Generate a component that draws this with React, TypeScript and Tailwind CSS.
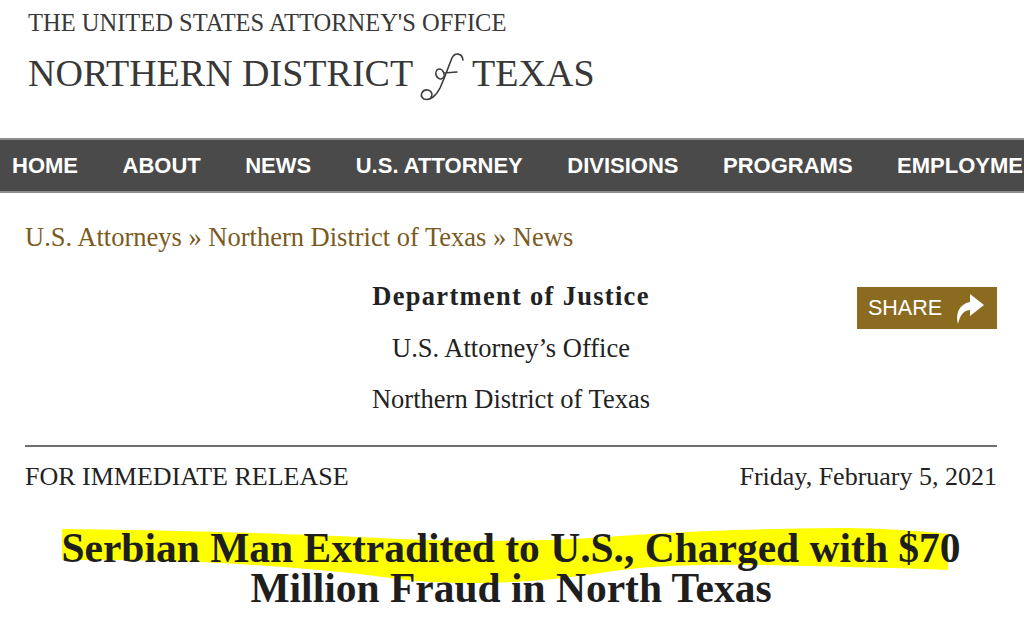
import React from 'react';

const navItems = ['HOME', 'ABOUT', 'NEWS', 'U.S. ATTORNEY', 'DIVISIONS', 'PROGRAMS', 'EMPLOYMENT'];

const ShareArrow: React.FC = () => (
  <svg width="32" height="36" viewBox="0 0 32 36" className="block">
    <path d="M5 34 C2 24 6 14 17 12 L17 4 L31 15 L17 26 L17 20 C11 20 7 25 5 34 Z" fill="#ffffff" />
  </svg>
);

// script "of" between DISTRICT and TEXAS
const LogoOf: React.FC = () => (
  <svg width="56" height="60" viewBox="0 0 56 60" className="absolute left-0 top-[-6px]">
    <ellipse cx="25" cy="27" rx="4" ry="5" transform="rotate(-20 25 27)" fill="none" stroke="#3c3c3c" strokeWidth="1.6" />
    <path
      d="M48 13 C47 6 40 5 37 11 C34 18 30 30 25 41 C21 49 15 54 9 52 C4 49 7 42 13 43 C17 44 18 48 16 50 M29 26 L42 25"
      fill="none"
      stroke="#3c3c3c"
      strokeWidth="1.6"
      strokeLinecap="round"
    />
  </svg>
);

export default function App() {
  return (
    <div className="w-[1024px] h-[636px] overflow-hidden bg-white font-['Liberation_Serif',serif]">
      {/* Logo */}
      <header className="pl-[28px] pt-[8px] h-[138px] text-[#383838]">
        <div className="text-[24.5px] leading-[30px]">THE UNITED STATES ATTORNEY'S OFFICE</div>
        <div className="mt-[15px] flex items-start text-[38px] leading-[40px] whitespace-nowrap">
          <span>NORTHERN DISTRICT</span>
          <span className="relative ml-[2px] w-[57px] h-[40px]">
            <LogoOf />
          </span>
          <span>TEXAS</span>
        </div>
      </header>

      {/* Nav */}
      <nav className="h-[55px] bg-[#4a4a4a] border-y-2 border-[#8c8c8c] flex items-center pl-[12px] whitespace-nowrap overflow-hidden font-['Liberation_Sans',Arial,sans-serif] font-bold text-[22px] text-white">
        {navItems.map((item) => (
          <span key={item} className="mr-[44.5px] shrink-0">{item}</span>
        ))}
      </nav>

      <main className="pl-[25px] pr-[27px]">
        {/* Breadcrumb */}
        <div className="pt-[28px] text-[26.5px] leading-[32px] text-[#7a5a1e]">
          U.S. Attorneys » Northern District of Texas » News
        </div>

        {/* Office block */}
        <div className="relative mt-[27px] flex flex-col items-center text-[#222] text-[26.5px] leading-[32px]">
          <div className="font-bold tracking-[1.3px]">Department of Justice</div>
          <div className="mt-[20px]">U.S. Attorney’s Office</div>
          <div className="mt-[19px]">Northern District of Texas</div>
          <button className="absolute right-0 top-[7px] w-[140px] h-[42px] bg-[#8b6b20] flex items-center justify-between pl-[11px] pr-[12px] font-['Liberation_Sans',Arial,sans-serif] text-[21.5px] text-white">
            SHARE
            <ShareArrow />
          </button>
        </div>

        <hr className="mt-[30px] border-0 h-[2px] bg-[#707070]" />

        <div className="mt-[14px] flex justify-between text-[26px] leading-[32px] text-[#222]">
          <span>FOR IMMEDIATE RELEASE</span>
          <span>Friday, February 5, 2021</span>
        </div>

        {/* Headline with highlighter mark */}
        <div className="relative mt-[35px]">
          <svg width="1024" height="70" viewBox="0 0 1024 70" className="absolute left-[-25px] top-0">
            <path
              d="M62 1 C150 2 260 4 400 11 C470 14 540 14 620 8 C700 2 800 0 850 0 C900 1 930 4 948 6 L948 42 C900 40 850 39 760 37 C700 36 650 37 600 45 C560 51 520 55 480 55 C440 55 410 53 390 50 C330 42 280 38 200 34 C140 32 100 32 62 32 Z"
              fill="#ffff00"
            />
          </svg>
          <h1 className="relative text-center font-bold text-[41.5px] leading-[40px] text-[#1e1e1e] whitespace-nowrap">
            Serbian Man Extradited to U.S., Charged with $70
            <br />
            Million Fraud in North Texas
          </h1>
        </div>
      </main>
    </div>
  );
}
